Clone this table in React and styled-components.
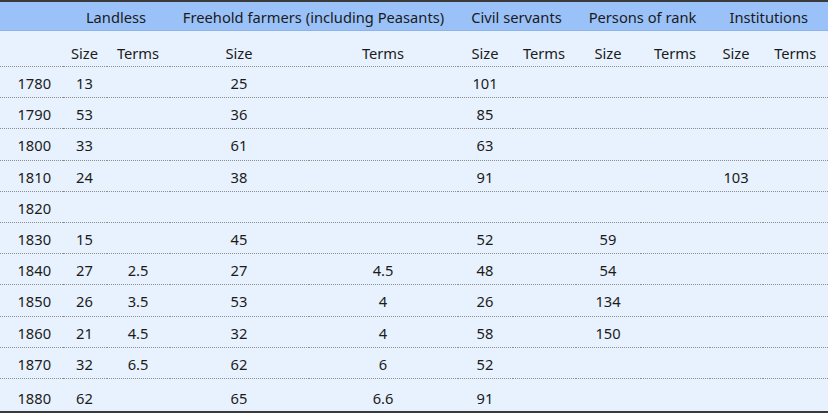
import React from "react";
import styled, { createGlobalStyle } from "styled-components";

const GlobalStyle = createGlobalStyle`
  html, body {
    margin: 0;
    padding: 0;
    background: #ffffff;
  }
  body {
    font-family: "Noto Sans", "Open Sans", sans-serif;
    color: #1b1b1b;
  }
`;

const columns = [62.5, 44, 63, 139, 149, 55, 63, 65, 69, 53, 65.5];

const groups = [
  "Landless",
  "Freehold farmers (including Peasants)",
  "Civil servants",
  "Persons of rank",
  "Institutions",
];

// year, landless size/terms, freehold size/terms, civil, persons, institutions
const rows = [
  ["1780", "13", "", "25", "", "101", "", "", "", "", ""],
  ["1790", "53", "", "36", "", "85", "", "", "", "", ""],
  ["1800", "33", "", "61", "", "63", "", "", "", "", ""],
  ["1810", "24", "", "38", "", "91", "", "", "", "103", ""],
  ["1820", "", "", "", "", "", "", "", "", "", ""],
  ["1830", "15", "", "45", "", "52", "", "59", "", "", ""],
  ["1840", "27", "2.5", "27", "4.5", "48", "", "54", "", "", ""],
  ["1850", "26", "3.5", "53", "4", "26", "", "134", "", "", ""],
  ["1860", "21", "4.5", "32", "4", "58", "", "150", "", "", ""],
  ["1870", "32", "6.5", "62", "6", "52", "", "", "", "", ""],
  ["1880", "62", "", "65", "6.6", "91", "", "", "", "", ""],
];

const App = () => {
  return (
    <Page>
      <GlobalStyle />
      <Table>
        <colgroup>
          {columns.map((w, i) => (
            <col key={i} style={{ width: `${w}px` }} />
          ))}
        </colgroup>
        <thead>
          <GroupRow>
            <GroupCell />
            {groups.map((g) => (
              <GroupCell key={g} colSpan={2}>
                {g}
              </GroupCell>
            ))}
          </GroupRow>
          <SubRow>
            <SubCell />
            {groups.map((g) => (
              <React.Fragment key={g}>
                <SubCell>Size</SubCell>
                <SubCell>Terms</SubCell>
              </React.Fragment>
            ))}
          </SubRow>
        </thead>
        <tbody>
          {rows.map((r, i) => (
            <tr key={r[0]}>
              {r.map((v, j) => (
                <DataCell key={j} $year={j === 0} $last={i === rows.length - 1}>
                  {v}
                </DataCell>
              ))}
            </tr>
          ))}
        </tbody>
      </Table>
    </Page>
  );
};

export default App;

const Page = styled.div`
  width: 831px;
  height: 414px;
  overflow: hidden;
`;

const Table = styled.table`
  width: 828px;
  table-layout: fixed;
  border-collapse: collapse;
  border-top: 2px solid #3a3a3a;
  border-bottom: 2px solid #3a3a3a;
  font-size: 14.7px;
  background: #e8f2fe;
`;

const GroupRow = styled.tr`
  background: #9ac2f9;
`;

const GroupCell = styled.th`
  height: 26px;
  padding: 2px 0 0;
  font-weight: 400;
  line-height: 20px;
  text-align: center;
  white-space: nowrap;
  border-bottom: 1px solid #8fb3e6;
`;

const SubRow = styled.tr`
  background: #e8f2fe;
`;

const SubCell = styled.th`
  height: 27px;
  padding: 8px 0 0;
  font-weight: 400;
  line-height: 20px;
  text-align: center;
  border-bottom: 1px dotted #8c8c8c;
`;

const DataCell = styled.td`
  height: ${(p) => (p.$last ? "25px" : "28.2px")};
  padding: ${(p) => (p.$last ? "7px" : "2px")} 0 0
    ${(p) => (p.$year ? "6px" : "0")};
  line-height: 20px;
  text-align: center;
  border-bottom: ${(p) => (p.$last ? "none" : "1px dotted #8c8c8c")};
`;
